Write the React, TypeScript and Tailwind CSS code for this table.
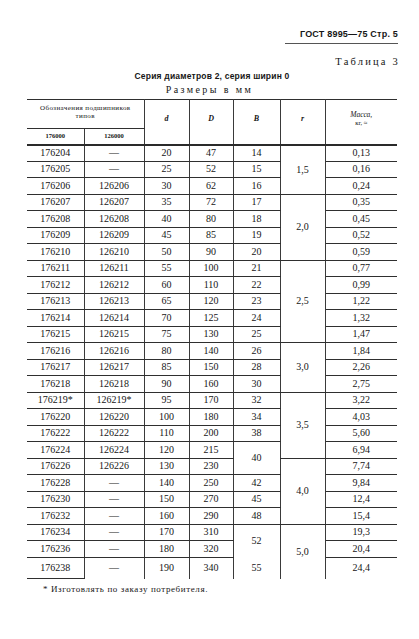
import React from "react";

type Row = [string, string, string, string, string, string];

const rows: Row[] = [
  ["176204", "—", "20", "47", "14", "0,13"],
  ["176205", "—", "25", "52", "15", "0,16"],
  ["176206", "126206", "30", "62", "16", "0,24"],
  ["176207", "126207", "35", "72", "17", "0,35"],
  ["176208", "126208", "40", "80", "18", "0,45"],
  ["176209", "126209", "45", "85", "19", "0,52"],
  ["176210", "126210", "50", "90", "20", "0,59"],
  ["176211", "126211", "55", "100", "21", "0,77"],
  ["176212", "126212", "60", "110", "22", "0,99"],
  ["176213", "126213", "65", "120", "23", "1,22"],
  ["176214", "126214", "70", "125", "24", "1,32"],
  ["176215", "126215", "75", "130", "25", "1,47"],
  ["176216", "126216", "80", "140", "26", "1,84"],
  ["176217", "126217", "85", "150", "28", "2,26"],
  ["176218", "126218", "90", "160", "30", "2,75"],
  ["176219*", "126219*", "95", "170", "32", "3,22"],
  ["176220", "126220", "100", "180", "34", "4,03"],
  ["176222", "126222", "110", "200", "38", "5,60"],
  ["176224", "126224", "120", "215", "40", "6,94"],
  ["176226", "126226", "130", "230", "", "7,74"],
  ["176228", "—", "140", "250", "42", "9,84"],
  ["176230", "—", "150", "270", "45", "12,4"],
  ["176232", "—", "160", "290", "48", "15,4"],
  ["176234", "—", "170", "310", "52", "19,3"],
  ["176236", "—", "180", "320", "", "20,4"],
  ["176238", "—", "190", "340", "55", "24,4"],
];

const bSpan: Record<number, number> = { 18: 2, 23: 2 };
const bSkip = new Set([19, 24]);
const rSpan: Record<number, [number, string]> = {
  0: [3, "1,5"],
  3: [4, "2,0"],
  7: [5, "2,5"],
  12: [3, "3,0"],
  15: [4, "3,5"],
  19: [4, "4,0"],
  23: [3, "5,0"],
};

const cell =
  "p-0 text-center align-middle border-r border-r-[#3a3a3a] border-b-[1.5px] border-b-[#2f2f2f]";
const cellLastRow = "p-0 text-center align-middle border-r border-r-[#3a3a3a] border-b-0";
const cellLastRowFirst =
  "p-0 text-center align-middle border-r border-r-[#3a3a3a] border-b-[1.5px] border-b-[#2f2f2f]";
const massCell = "p-0 text-center align-middle border-b-[1.5px] border-b-[#2f2f2f]";
const massCellLast = "p-0 text-center align-middle border-b-0";

export default function App() {
  return (
    <div
      className="w-[419px] h-[639px] bg-white overflow-hidden text-[#161616]"
      style={{ fontFamily: '"Liberation Serif", "DejaVu Serif", serif' }}
    >
      <div className="pt-[30px] pr-[21px] flex flex-col items-end">
        <div
          className="text-[9px] leading-[9px] font-bold tracking-[0.2px]"
          style={{ fontFamily: '"Liberation Sans", Arial, sans-serif' }}
        >
          ГОСТ 8995—75 Стр. 5
        </div>
        <div className="mt-[4px] w-[113px] h-[1px] bg-[#555]" />
        <div className="mt-[12px] text-[10.5px] leading-[11px] tracking-[2.2px] mr-[-2px]">
          Таблица 3
        </div>
      </div>
      <div className="ml-[27px] w-[370px] text-center">
        <div
          className="mt-[5px] text-[8.5px] leading-[9px] font-bold tracking-[0.2px]"
          style={{ fontFamily: '"Liberation Sans", Arial, sans-serif' }}
        >
          Серия диаметров 2, серия ширин 0
        </div>
        <div className="mt-[3px] text-[10px] leading-[11px] tracking-[2.4px] pr-[5px]">
          Размеры в мм
        </div>
      </div>
      <div className="ml-[27px] mt-[4px] w-[370px]">
        <table className="table-fixed border-collapse w-[370px] text-[10px] leading-[10px]">
          <colgroup>
            <col className="w-[57px]" />
            <col className="w-[60px]" />
            <col className="w-[45px]" />
            <col className="w-[44px]" />
            <col className="w-[47px]" />
            <col className="w-[45px]" />
            <col className="w-[72px]" />
          </colgroup>
          <thead>
            <tr className="h-[29px] border-t-[1.5px] border-t-[#2f2f2f]">
              <th
                colSpan={2}
                className="p-0 pb-[4px] font-normal text-[7px] leading-[8px] tracking-[0.4px] text-center align-middle border-r border-r-[#3a3a3a] border-b-[1.5px] border-b-[#2f2f2f] whitespace-nowrap"
              >
                Обозначения подшипников
                <br />
                типов
              </th>
              <th
                rowSpan={2}
                className="p-0 pb-[6px] italic font-bold text-[8px] text-center align-middle border-r border-r-[#3a3a3a] border-b-[2.5px] border-b-[#2a2a2a]"
              >
                d
              </th>
              <th
                rowSpan={2}
                className="p-0 pb-[6px] italic font-bold text-[8px] text-center align-middle border-r border-r-[#3a3a3a] border-b-[2.5px] border-b-[#2a2a2a]"
              >
                D
              </th>
              <th
                rowSpan={2}
                className="p-0 pb-[6px] italic font-bold text-[8px] text-center align-middle border-r border-r-[#3a3a3a] border-b-[2.5px] border-b-[#2a2a2a]"
              >
                B
              </th>
              <th
                rowSpan={2}
                className="p-0 pb-[6px] italic font-bold text-[8px] text-center align-middle border-r border-r-[#3a3a3a] border-b-[2.5px] border-b-[#2a2a2a]"
              >
                r
              </th>
              <th
                rowSpan={2}
                className="p-0 pb-[6px] font-normal text-[7.5px] leading-[8px] text-center align-middle border-b-[2.5px] border-b-[#2a2a2a]"
              >
                <span className="italic">Масса,</span>
                <br />
                <span className="text-[6.5px]">кг, ≈</span>
              </th>
            </tr>
            <tr className="h-[16px]">
              <th className="p-0 font-bold text-[6.5px] text-center align-middle border-r border-r-[#3a3a3a] border-b-[2.5px] border-b-[#2a2a2a]">
                176000
              </th>
              <th className="p-0 font-bold text-[6.5px] text-center align-middle border-r border-r-[#3a3a3a] border-b-[2.5px] border-b-[#2a2a2a]">
                126000
              </th>
            </tr>
          </thead>
          <tbody>
            {rows.map((r, i) => {
              const last = i === rows.length - 1;
              const c = last ? cellLastRow : cell;
              return (
                <tr key={r[0]} className={last ? "h-[21.5px]" : "h-[16.5px]"}>
                  <td className={last ? cellLastRowFirst : cell}>{r[0]}</td>
                  <td className={c}>{r[1]}</td>
                  <td className={c}>{r[2]}</td>
                  <td className={c}>{r[3]}</td>
                  {!bSkip.has(i) && (
                    <td
                      rowSpan={bSpan[i] ?? 1}
                      className={last || i === 23 ? cellLastRow : c}
                    >
                      {r[4]}
                    </td>
                  )}
                  {rSpan[i] && (
                    <td
                      rowSpan={rSpan[i][0]}
                      className={i === 23 ? cellLastRow : cell}
                    >
                      {rSpan[i][1]}
                    </td>
                  )}
                  <td className={last ? massCellLast : massCell}>{r[5]}</td>
                </tr>
              );
            })}
          </tbody>
        </table>
      </div>
      <div className="ml-[43px] mt-[5px] text-[9px] leading-[10px] tracking-[0.6px]">
        * Изготовлять по заказу потребителя.
      </div>
    </div>
  );
}
